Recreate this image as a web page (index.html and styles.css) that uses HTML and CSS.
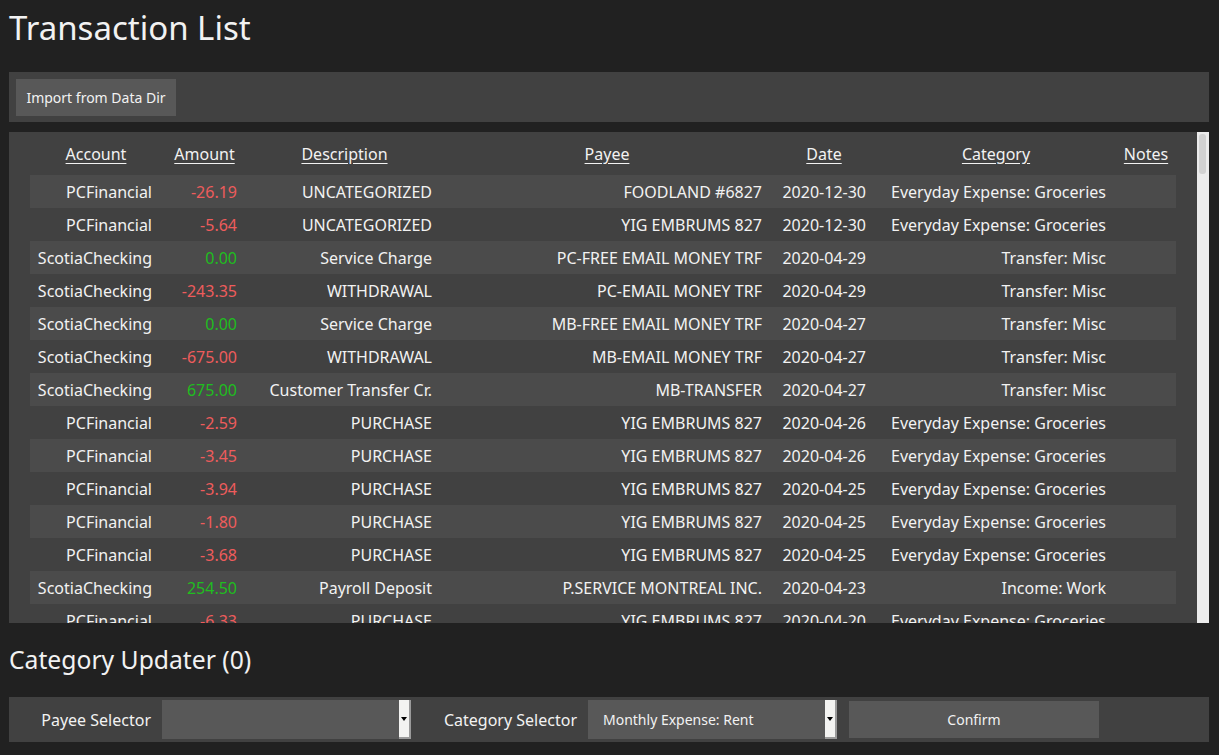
FILE: index.html
```html
<!DOCTYPE html>
<html>
<head>
<meta charset="utf-8">
<link rel="stylesheet" href="styles.css">
</head>
<body>
<div class="page">
  <h1 class="title">Transaction List</h1>
  <div class="toolbar">
    <button class="btn">Import from Data Dir</button>
  </div>
  <div class="table-panel">
    <div class="table-area">
      <table class="tx">
        <colgroup>
          <col class="c-acc"><col class="c-amt"><col class="c-desc"><col class="c-payee"><col class="c-date"><col class="c-cat"><col class="c-notes">
        </colgroup>
        <thead>
          <tr><th>Account</th><th>Amount</th><th>Description</th><th>Payee</th><th>Date</th><th>Category</th><th>Notes</th></tr>
        </thead>
        <tbody>
          <tr><td>PCFinancial</td><td class="neg">-26.19</td><td>UNCATEGORIZED</td><td>FOODLAND #6827</td><td>2020-12-30</td><td>Everyday Expense: Groceries</td><td></td></tr>
          <tr><td>PCFinancial</td><td class="neg">-5.64</td><td>UNCATEGORIZED</td><td>YIG EMBRUMS 827</td><td>2020-12-30</td><td>Everyday Expense: Groceries</td><td></td></tr>
          <tr><td>ScotiaChecking</td><td class="pos">0.00</td><td>Service Charge</td><td>PC-FREE EMAIL MONEY TRF</td><td>2020-04-29</td><td>Transfer: Misc</td><td></td></tr>
          <tr><td>ScotiaChecking</td><td class="neg">-243.35</td><td>WITHDRAWAL</td><td>PC-EMAIL MONEY TRF</td><td>2020-04-29</td><td>Transfer: Misc</td><td></td></tr>
          <tr><td>ScotiaChecking</td><td class="pos">0.00</td><td>Service Charge</td><td>MB-FREE EMAIL MONEY TRF</td><td>2020-04-27</td><td>Transfer: Misc</td><td></td></tr>
          <tr><td>ScotiaChecking</td><td class="neg">-675.00</td><td>WITHDRAWAL</td><td>MB-EMAIL MONEY TRF</td><td>2020-04-27</td><td>Transfer: Misc</td><td></td></tr>
          <tr><td>ScotiaChecking</td><td class="pos">675.00</td><td>Customer Transfer Cr.</td><td>MB-TRANSFER</td><td>2020-04-27</td><td>Transfer: Misc</td><td></td></tr>
          <tr><td>PCFinancial</td><td class="neg">-2.59</td><td>PURCHASE</td><td>YIG EMBRUMS 827</td><td>2020-04-26</td><td>Everyday Expense: Groceries</td><td></td></tr>
          <tr><td>PCFinancial</td><td class="neg">-3.45</td><td>PURCHASE</td><td>YIG EMBRUMS 827</td><td>2020-04-26</td><td>Everyday Expense: Groceries</td><td></td></tr>
          <tr><td>PCFinancial</td><td class="neg">-3.94</td><td>PURCHASE</td><td>YIG EMBRUMS 827</td><td>2020-04-25</td><td>Everyday Expense: Groceries</td><td></td></tr>
          <tr><td>PCFinancial</td><td class="neg">-1.80</td><td>PURCHASE</td><td>YIG EMBRUMS 827</td><td>2020-04-25</td><td>Everyday Expense: Groceries</td><td></td></tr>
          <tr><td>PCFinancial</td><td class="neg">-3.68</td><td>PURCHASE</td><td>YIG EMBRUMS 827</td><td>2020-04-25</td><td>Everyday Expense: Groceries</td><td></td></tr>
          <tr><td>ScotiaChecking</td><td class="pos">254.50</td><td>Payroll Deposit</td><td>P.SERVICE MONTREAL INC.</td><td>2020-04-23</td><td>Income: Work</td><td></td></tr>
          <tr><td>PCFinancial</td><td class="neg">-6.33</td><td>PURCHASE</td><td>YIG EMBRUMS 827</td><td>2020-04-20</td><td>Everyday Expense: Groceries</td><td></td></tr>
        </tbody>
      </table>
    </div>
    <div class="scrollbar"><div class="thumb"></div></div>
  </div>
  <h2 class="subtitle">Category Updater (0)</h2>
  <div class="updater">
    <label class="lbl lbl-payee">Payee Selector</label>
    <div class="combo"><span class="combo-text"></span><span class="combo-arrow"><span class="tri"></span></span></div>
    <label class="lbl lbl-cat">Category Selector</label>
    <div class="combo"><span class="combo-text">Monthly Expense: Rent</span><span class="combo-arrow"><span class="tri"></span></span></div>
    <button class="btn confirm">Confirm</button>
  </div>
</div>
</body>
</html>
```

FILE: styles.css
```css
html, body {
  margin: 0;
  padding: 0;
  background: #212121;
  color: #f2f2f2;
  font-family: "Noto Sans", "Open Sans", sans-serif;
}

.page {
  display: flex;
  flex-direction: column;
  padding: 0 10px 0 9px;
  height: 755px;
  box-sizing: border-box;
}

.title {
  margin: 0;
  height: 72px;
  font-size: 33px;
  font-weight: 400;
  line-height: 55px;
  padding-left: 0;
}

.toolbar {
  background: #414141;
  height: 50px;
  display: flex;
  align-items: center;
  padding-left: 7px;
}

.btn {
  background: #585858;
  color: #f2f2f2;
  border: none;
  font-family: "Noto Sans", "Open Sans", sans-serif;
  font-size: 14px;
  height: 37px;
  padding: 0 10px;
  cursor: default;
}

.toolbar .btn {
  width: 160px;
}

.table-panel {
  margin-top: 10px;
  height: 491px;
  background: #414141;
  display: flex;
}

.table-area {
  flex: 1;
  overflow: hidden;
  display: flex;
  justify-content: center;
}

.tx {
  border-collapse: collapse;
  table-layout: fixed;
  width: 1146px;
  flex-shrink: 0;
  font-size: 16px;
  align-self: flex-start;
}

.c-acc { width: 132px; }
.c-amt { width: 85px; }
.c-desc { width: 195px; }
.c-payee { width: 330px; }
.c-date { width: 104px; }
.c-cat { width: 240px; }
.c-notes { width: 60px; }

.tx th {
  font-weight: 400;
  text-decoration: underline;
  text-underline-offset: 3px;
  text-align: center;
  height: 43px;
  padding: 0;
  white-space: nowrap;
}

.tx td {
  height: 33px;
  padding: 0 10px 0 0;
  text-align: right;
  white-space: nowrap;
  overflow: hidden;
}

.tx tbody tr:nth-child(odd) {
  background: #4b4b4b;
}

.tx td.neg { color: #ee5c5c; }
.tx td.pos { color: #20bd20; }

.scrollbar {
  width: 12px;
  background: #ececec;
  position: relative;
  flex-shrink: 0;
}

.thumb {
  position: absolute;
  left: 2px;
  top: 2px;
  width: 7px;
  height: 40px;
  border-radius: 3px;
  background: #d2d2d2;
}

.subtitle {
  margin: 0;
  height: 74px;
  font-size: 24.7px;
  font-weight: 400;
  line-height: 74px;
}

.updater {
  background: #414141;
  height: 45px;
  display: flex;
  align-items: center;
  font-size: 16px;
}

.lbl {
  text-align: right;
  padding-right: 11px;
  box-sizing: border-box;
}

.lbl-payee { width: 153px; }
.lbl-cat { width: 177px; }

.combo {
  width: 249px;
  height: 39px;
  background: #585858;
  display: flex;
  align-items: center;
  font-size: 14px;
}

.combo-text {
  flex: 1;
  padding-left: 15px;
}

.combo-arrow {
  width: 12px;
  height: 39px;
  background: #f3f3f1;
  box-sizing: border-box;
  border-right: 2px solid #9a9a9a;
  border-bottom: 2px solid #9a9a9a;
  display: flex;
  align-items: center;
  justify-content: center;
}

.tri {
  width: 0;
  height: 0;
  border-left: 3.5px solid transparent;
  border-right: 3.5px solid transparent;
  border-top: 4px solid #000;
}

.confirm {
  margin-left: 12px;
  width: 250px;
  height: 37px;
}
```
